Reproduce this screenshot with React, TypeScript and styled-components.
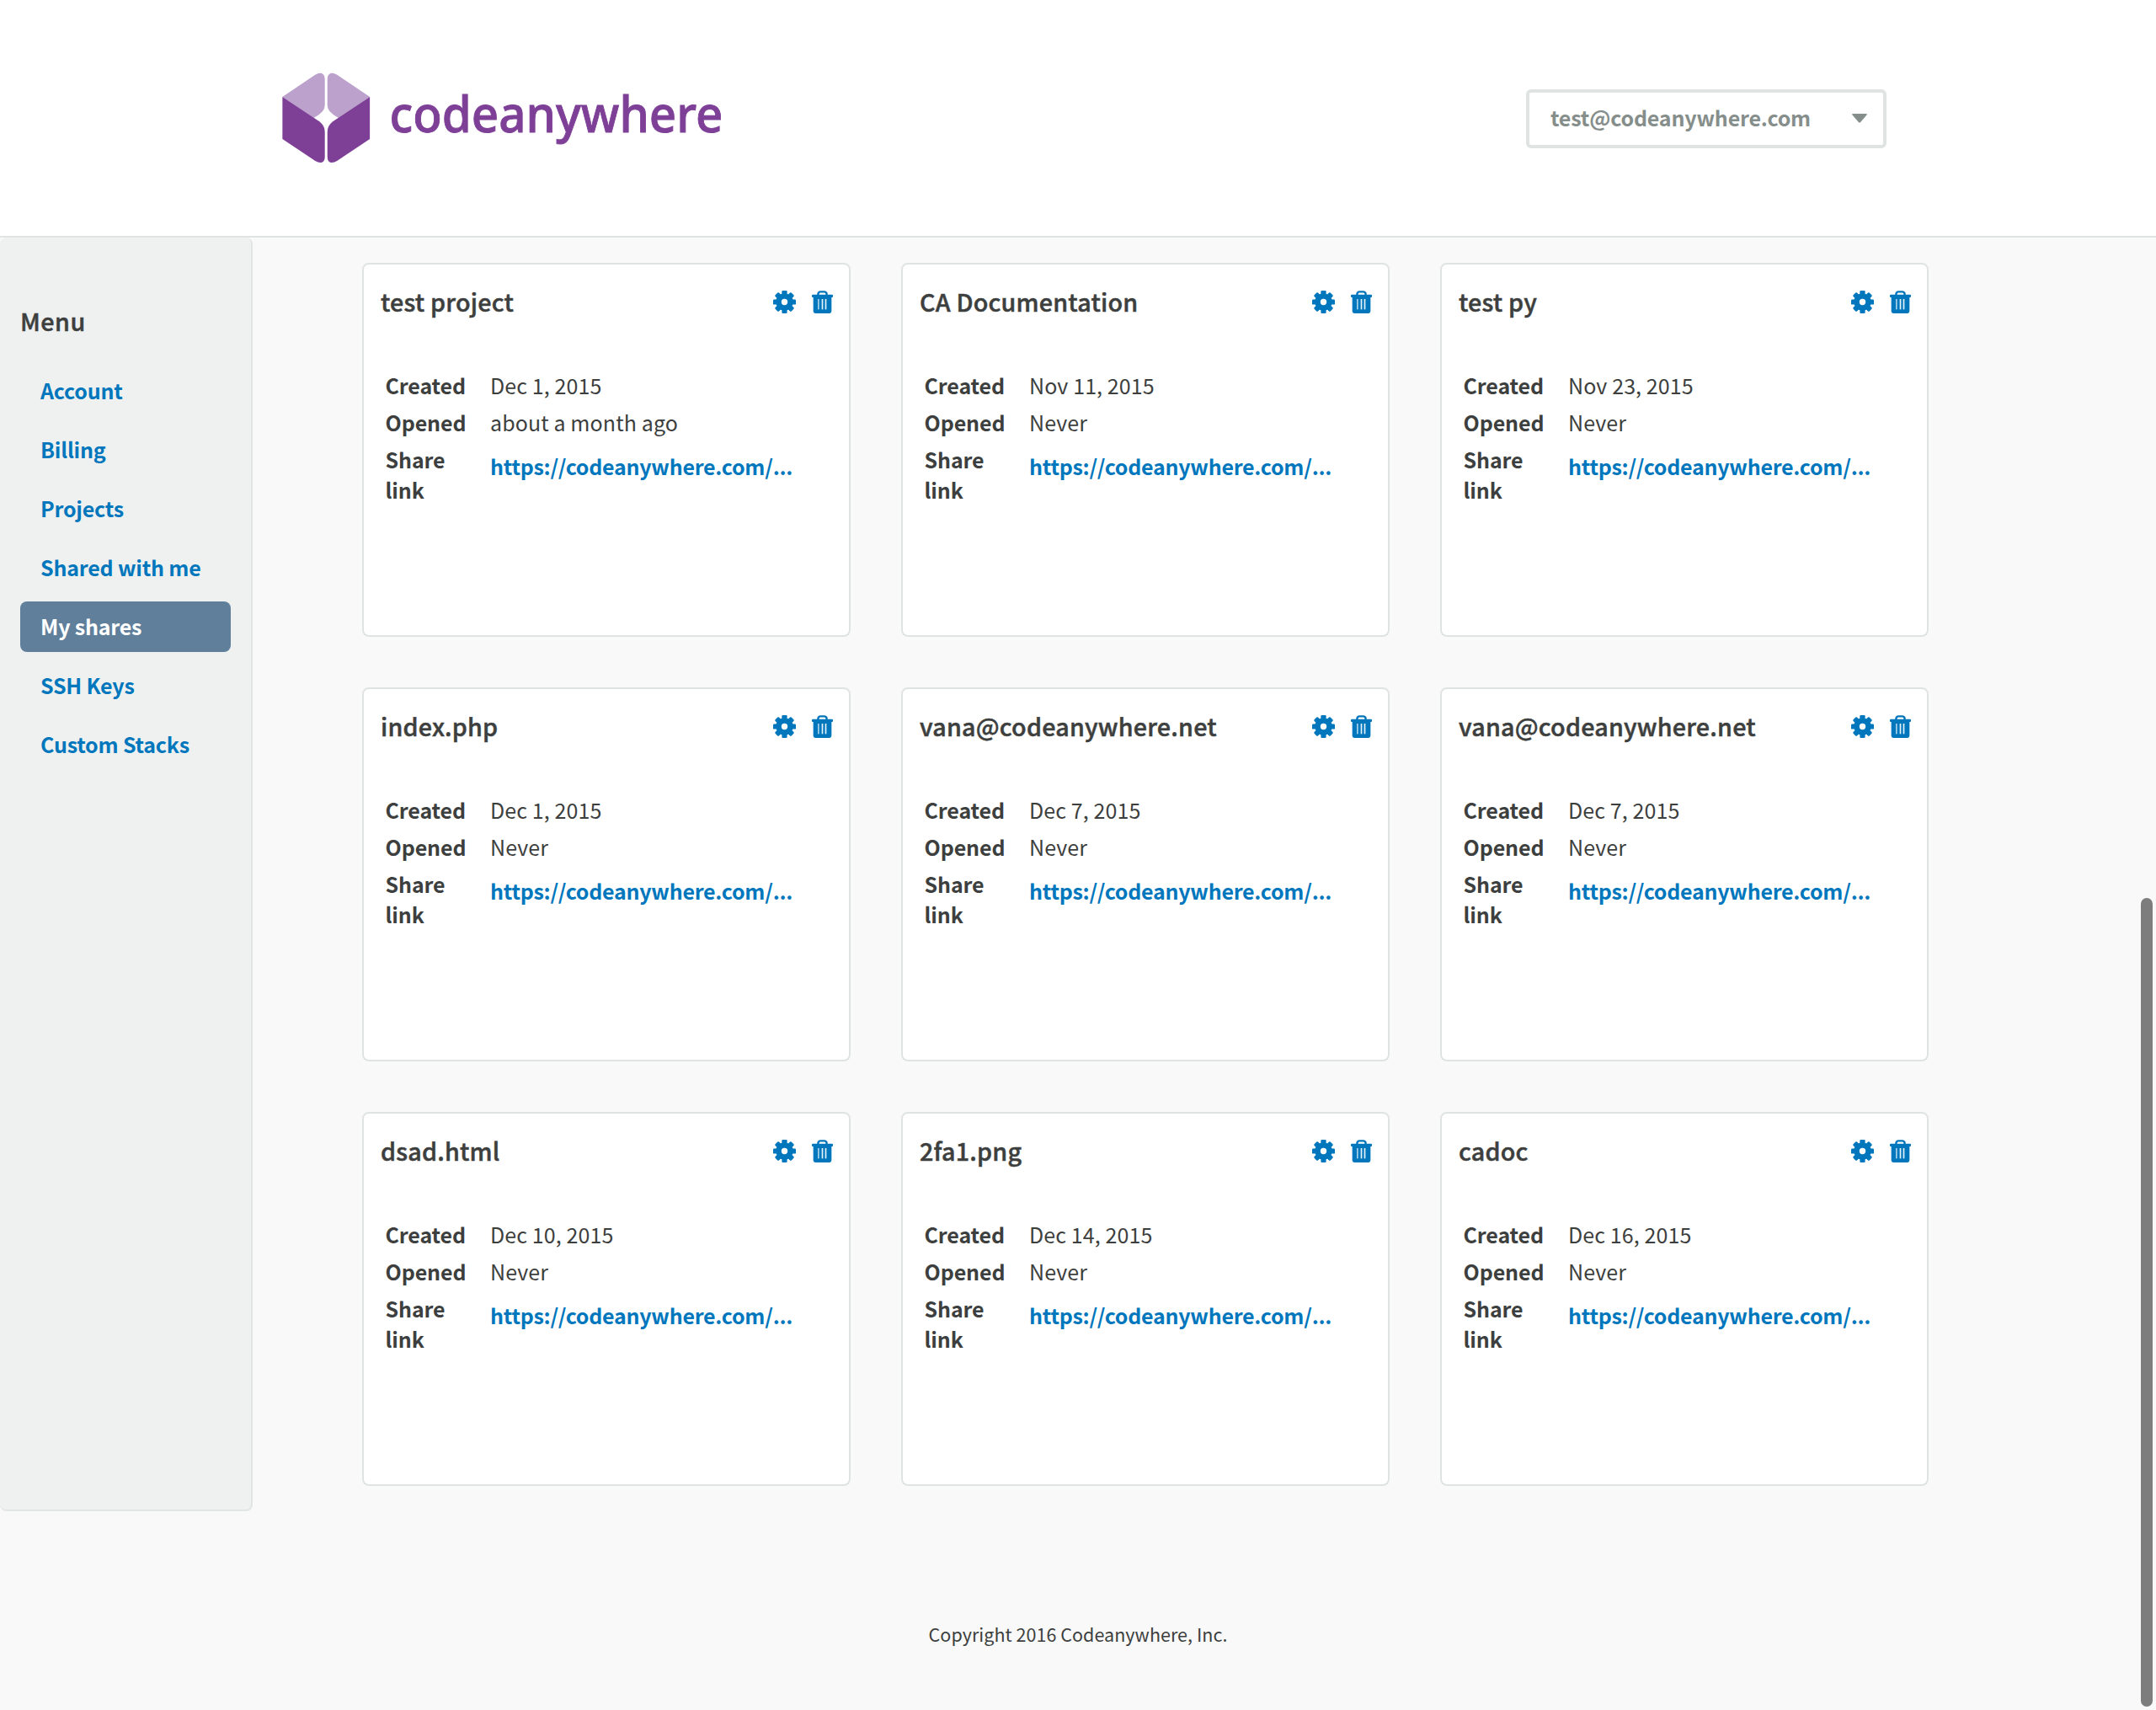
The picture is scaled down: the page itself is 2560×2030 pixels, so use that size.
import React from "react";
import styled, { createGlobalStyle } from "styled-components";

const color = {
  page: "#f9f9f9",
  text: "#3d3f3e",
  link: "#0077bd",
  line: "#dfe4e3",
  panel: "#eef1f0",
  active: "#607f9b",
  muted: "#858e8b",
  brand: "#7e3f97",
  brandLight: "#bba1cb",
};

const Global = createGlobalStyle`
  * { box-sizing: border-box; }
  html, body { margin: 0; padding: 0; background: ${color.page}; overflow: hidden; }
  body {
    font-family: "Noto Sans CJK JP", "Noto Sans", sans-serif;
    font-size: 25px;
    line-height: 36px;
    color: ${color.text};
  }
`;

const Page = styled.div`
  position: relative;
  display: flex;
  flex-direction: column;
  width: 2560px;
  height: 2030px;
  overflow: hidden;
`;

const Header = styled.header`
  display: flex;
  justify-content: space-between;
  align-items: flex-start;
  height: 282px;
  padding: 70px 320px 0;
  background: #fff;
  border-bottom: 2px solid ${color.line};
`;

const LogoSvg = styled.svg`
  display: block;
  width: 560px;
  height: 140px;
  overflow: visible;
`;

const UserSelect = styled.button`
  display: flex;
  justify-content: space-between;
  align-items: center;
  width: 428px;
  height: 70px;
  margin-top: 36px;
  padding: 0 19px 4px 25px;
  border: 4px solid ${color.line};
  border-radius: 6px;
  background: #fff;
  color: ${color.muted};
  font: inherit;
  font-weight: 700;
  letter-spacing: -0.18px;
`;

const Caret = styled.svg`
  width: 18px;
  height: 11px;
  margin-top: 3px;
`;

const Body = styled.div`
  display: flex;
  align-items: flex-start;
  height: 1512px;
`;

const Sidebar = styled.aside`
  width: 300px;
  height: 1512px;
  padding: 79px 24px 0;
  background: ${color.panel};
  border: solid #e1e5e4;
  border-width: 0 2px 2px 0;
  border-radius: 8px;
`;

const MenuTitle = styled.h2`
  margin: 0 0 33px;
  font-size: 28.7px;
  line-height: 40px;
  font-weight: 500;
  letter-spacing: 0.5px;
  -webkit-text-stroke: 0.5px currentColor;
`;

const MenuList = styled.nav`
  display: flex;
  flex-direction: column;
  gap: 10px;
`;

const MenuItem = styled.a<{ $active?: boolean }>`
  height: 60px;
  width: 250px;
  padding: 11px 24px 13px;
  border-radius: 8px;
  font-weight: 700;
  letter-spacing: -0.2px;
  white-space: nowrap;
  color: ${(p) => (p.$active ? "#fff" : color.link)};
  background: ${(p) => (p.$active ? color.active : "transparent")};
`;

const Grid = styled.main`
  display: grid;
  grid-template-columns: repeat(3, 580px);
  grid-auto-rows: 444px;
  gap: 60px;
  padding: 30px 0 0 130px;
`;

const Card = styled.article`
  padding: 24px 19px 0 20px;
  background: #fff;
  border: 2px solid ${color.line};
  border-radius: 8px;
`;

const CardHead = styled.div`
  display: flex;
  justify-content: space-between;
  align-items: center;
  height: 40px;
`;

const CardTitle = styled.h3`
  margin: 0;
  font-size: 28.7px;
  line-height: 40px;
  font-weight: 500;
  letter-spacing: 0.2px;
  -webkit-text-stroke: 0.5px currentColor;
`;

const Actions = styled.div`
  display: flex;
  align-items: center;
  gap: 19px;
  padding-top: 1px;
  color: ${color.link};
`;

const Icon = styled.svg<{ $w: number }>`
  display: block;
  width: ${(p) => p.$w}px;
  height: 27px;
`;

const Details = styled.dl`
  display: grid;
  grid-template-columns: 124.5px 1fr;
  row-gap: 8px;
  margin: 57px 0 0;
  padding: 4px 0 0 5.5px;
`;

const Label = styled.dt`
  width: 100px;
  font-weight: 700;
  letter-spacing: -0.1px;
`;

const Value = styled.dd`
  margin: 0;
  letter-spacing: 0.1px;
`;

const ShareLink = styled.a`
  display: block;
  padding-top: 8px;
  color: ${color.link};
  font-weight: 700;
  letter-spacing: -0.26px;
  white-space: nowrap;
`;

const Footer = styled.footer`
  padding-top: 128px;
  text-align: center;
  font-size: 21.5px;
  letter-spacing: 0.04px;
`;

const ScrollThumb = styled.div`
  position: absolute;
  right: 4px;
  top: 1066px;
  width: 14px;
  height: 960px;
  border-radius: 7px;
  background: #7d7d7d;
`;

const Half = () => (
  <>
    <path
      fill={color.brandLight}
      d="M43 135 L152 56 Q164 49 173 51 Q184 55 184 72 V164 Q184 177 176 187 Q166 200 147 210 Z"
    />
    <path
      fill={color.brand}
      d="M43 135 L166 223 Q184 238 184 260 V348 Q184 366 172 369 Q162 370 152 363 L43 285 Z"
    />
  </>
);

const Logo = () => (
  <LogoSvg viewBox="0 0 560 140">
    <g transform="scale(0.35714 0.33333)">
      <Half />
      <g transform="translate(376.5 0) scale(-1 1)">
        <Half />
      </g>
    </g>
    <text
      x="142.5"
      y="86.6"
      textLength="396"
      lengthAdjust="spacingAndGlyphs"
      fontFamily="Noto Sans, sans-serif"
      fontSize="59.5"
      fontWeight="500"
      fill={color.brand}
      stroke={color.brand}
      strokeWidth="0.9"
    >
      codeanywhere
    </text>
  </LogoSvg>
);

const Gear = () => (
  <Icon $w={27} viewBox="-13.5 -13.5 27 27" fill="currentColor">
    <circle r="10.3" />
    {[0, 45, 90, 135].map((a) => (
      <rect key={a} x="-3.1" y="-13.5" width="6.2" height="27" rx="1.2" transform={`rotate(${a})`} />
    ))}
    <circle r="3.7" fill="#fff" />
  </Icon>
);

const Trash = () => (
  <Icon $w={25} viewBox="0 0 75 81" fill="currentColor">
    <path d="M22 18 V14 Q22 4 31 4 H44 Q53 4 53 14 V18" fill="none" stroke="currentColor" strokeWidth="7" />
    <rect x="0" y="14" width="75" height="10" rx="3" />
    <path d="M5 20 H70 V72 Q70 81 61 81 H14 Q5 81 5 72 Z" />
    <g fill="#fff">
      <rect x="21" y="30" width="5" height="37" opacity="0.65" />
      <rect x="35" y="30" width="5" height="37" opacity="0.9" />
      <rect x="47" y="30" width="5" height="37" opacity="0.9" />
    </g>
  </Icon>
);

const menu = ["Account", "Billing", "Projects", "Shared with me", "My shares", "SSH Keys", "Custom Stacks"];

const shares = [
  { title: "test project", created: "Dec 1, 2015", opened: "about a month ago" },
  { title: "CA Documentation", created: "Nov 11, 2015", opened: "Never" },
  { title: "test py", created: "Nov 23, 2015", opened: "Never" },
  { title: "index.php", created: "Dec 1, 2015", opened: "Never" },
  { title: "vana@codeanywhere.net", created: "Dec 7, 2015", opened: "Never" },
  { title: "vana@codeanywhere.net", created: "Dec 7, 2015", opened: "Never" },
  { title: "dsad.html", created: "Dec 10, 2015", opened: "Never" },
  { title: "2fa1.png", created: "Dec 14, 2015", opened: "Never" },
  { title: "cadoc", created: "Dec 16, 2015", opened: "Never" },
];

export default function App() {
  return (
    <Page>
      <Global />
      <Header>
        <Logo />
        <UserSelect>
          test@codeanywhere.com
          <Caret viewBox="0 0 18 11">
            <path d="M1 0 H17 Q18.400 0.400 17.500 1.600 L10.200 10 Q9 11 7.800 10 L0.500 1.600 Q-0.400 0.400 1 0 Z" fill={color.muted} />
          </Caret>
        </UserSelect>
      </Header>
      <Body>
        <Sidebar>
          <MenuTitle>Menu</MenuTitle>
          <MenuList>
            {menu.map((m) => (
              <MenuItem key={m} $active={m === "My shares"}>
                {m}
              </MenuItem>
            ))}
          </MenuList>
        </Sidebar>
        <Grid>
          {shares.map((s, i) => (
            <Card key={i}>
              <CardHead>
                <CardTitle>{s.title}</CardTitle>
                <Actions>
                  <Gear />
                  <Trash />
                </Actions>
              </CardHead>
              <Details>
                <Label>Created</Label>
                <Value>{s.created}</Value>
                <Label>Opened</Label>
                <Value>{s.opened}</Value>
                <Label>Share link</Label>
                <Value>
                  <ShareLink>https://codeanywhere.com/...</ShareLink>
                </Value>
              </Details>
            </Card>
          ))}
        </Grid>
      </Body>
      <Footer>Copyright 2016 Codeanywhere, Inc.</Footer>
      <ScrollThumb />
    </Page>
  );
}
